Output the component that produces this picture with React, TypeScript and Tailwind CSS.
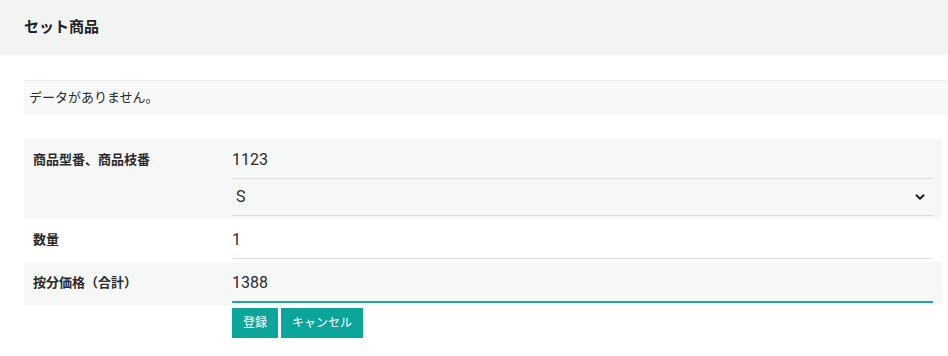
import { ChevronDown } from "lucide-react";

const font = "font-['Roboto','Noto_Sans_CJK_JP',sans-serif]";

export default function App() {
  return (
    <div className={`${font} min-h-[356px] w-[948px] bg-white text-[#2b2b2b]`}>
      <div className="flex h-[55px] items-center bg-[#f2f3f3] px-6">
        <h2 className="text-[15px] font-bold text-[#222]">セット商品</h2>
      </div>

      <div className="mt-[25px] ml-6 flex h-[35px] items-center border-t border-[#ececec] bg-[#f7f8f8] px-[5px] text-[13px]">
        データがありません。
      </div>

      <div className="mx-6 mt-6 w-[918px]">
        <div className="flex bg-[#f6f7f7] pb-[3px]">
          <div className="w-[208px] pl-[9px] pt-[12px] text-[13px] font-bold leading-[18px]">
            商品型番、商品枝番
          </div>
          <div className="flex-1 pr-[9px]">
            <div className="flex h-[40px] items-center border-b border-[#dedede] pt-[2px] text-[16px]">
              1123
            </div>
            <div className="flex h-[37px] items-center justify-between border-b border-[#dedede] pl-[4px] pr-[6px] text-[16px]">
              <span>S</span>
              <ChevronDown size={14} strokeWidth={3.5} className="text-[#222]" />
            </div>
          </div>
        </div>

        <div className="flex bg-white pb-[3px]">
          <div className="w-[208px] pl-[9px] pt-[12px] text-[13px] font-bold leading-[18px]">
            数量
          </div>
          <div className="flex-1 pr-[9px]">
            <div className="flex h-[40px] items-center border-b border-[#dedede] pt-[2px] text-[16px]">
              1
            </div>
          </div>
        </div>

        <div className="flex bg-[#f6f7f7] pb-[3px]">
          <div className="w-[208px] pl-[9px] pt-[12px] text-[13px] font-bold leading-[18px]">
            按分価格（合計）
          </div>
          <div className="flex-1 pr-[9px]">
            <div className="flex h-[40px] items-center border-b border-[#26a69a] pt-[2px] text-[16px] shadow-[0_1px_0_0_#26a69a]">
              1388
            </div>
          </div>
        </div>

        <div className="flex gap-[3px] pl-[208px] pt-[3px]">
          <button
            type="button"
            className="h-[30px] bg-[#0ba59b] px-[11px] text-[12px] text-white"
          >
            登録
          </button>
          <button
            type="button"
            className="h-[30px] bg-[#0ba59b] px-[11px] text-[12px] text-white"
          >
            キャンセル
          </button>
        </div>
      </div>
    </div>
  );
}
